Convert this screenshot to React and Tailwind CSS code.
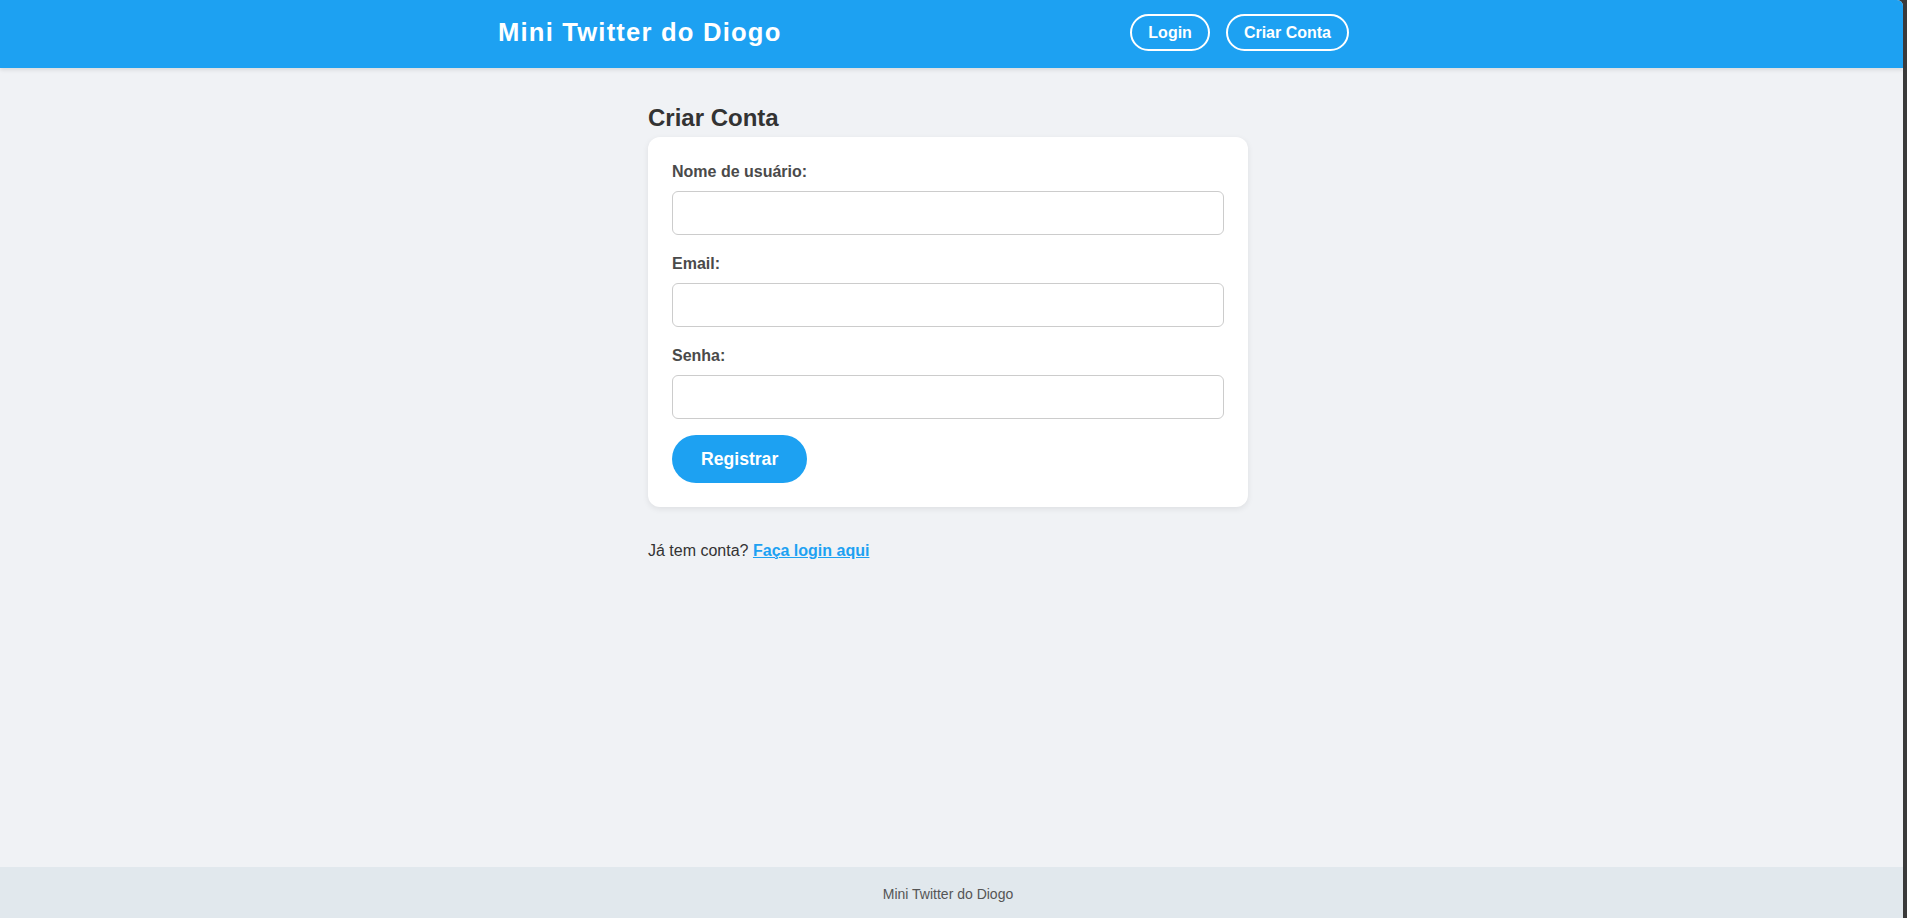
import React, { useState } from 'react';

const App = () => {
  const [form, setForm] = useState({ username: '', email: '', password: '' });

  const handleChange = (e) => {
    const { name, value } = e.target;
    setForm(prev => ({ ...prev, [name]: value }));
  };

  const fields = [
    { name: 'username', label: 'Nome de usuário:', type: 'text', gap: 'mb-[18px]' },
    { name: 'email', label: 'Email:', type: 'email', gap: 'mb-[18px]' },
    { name: 'password', label: 'Senha:', type: 'password', gap: 'mb-4' }
  ];

  return (
    <div className="min-h-screen flex bg-[#3a3a3a] font-['Liberation_Sans',Arial,sans-serif]">
      <div className="w-[1903px] min-h-screen flex flex-col bg-[#f0f2f5] rounded-tr-[6px] overflow-hidden">
        {/* Header */}
        <header className="relative z-10 h-[68px] pr-[7px] bg-[#1da1f2] shadow-[0_2px_4px_rgba(0,0,0,0.1)]">
          <div className="mx-auto w-[900px] h-full flex items-center justify-between pb-[3px]">
            <h1 className="text-[25.6px] font-bold tracking-[1.2px] text-white leading-none">
              Mini Twitter do Diogo
            </h1>
            <nav className="flex items-center gap-4 pr-[49px]">
              <a href="#" className="px-4 py-[7px] leading-[19px] border-2 border-white rounded-full text-white font-bold text-base">
                Login
              </a>
              <a href="#" className="px-4 py-[7px] leading-[19px] border-2 border-white rounded-full text-white font-bold text-base">
                Criar Conta
              </a>
            </nav>
          </div>
        </header>

        {/* Main */}
        <main className="flex-1 pt-9 pr-[7px]">
          <div className="mx-auto w-[600px]">
            <h2 className="text-2xl font-bold leading-[28px] text-[#333] mb-[5px]">Criar Conta</h2>

            <form className="bg-white rounded-[12px] p-6 shadow-[0_2px_6px_rgba(0,0,0,0.08)]">
              {fields.map(f => (
                <div key={f.name} className={f.gap}>
                  <label className="block mb-2 text-base leading-[22px] font-bold text-[#4a4a4a]">
                    {f.label}
                  </label>
                  <input
                    type={f.type}
                    name={f.name}
                    value={form[f.name]}
                    onChange={handleChange}
                    className="block w-full h-11 px-3 border border-[#ccc] rounded-md bg-white text-base outline-none"
                  />
                </div>
              ))}
              <button
                type="submit"
                className="h-12 px-[29px] rounded-full bg-[#1da1f2] text-white font-bold text-[17.6px]"
              >
                Registrar
              </button>
            </form>

            <p className="mt-8 text-base leading-[24px] text-[#333]">
              Já tem conta?{' '}
              <a href="#" className="font-bold text-[#1da1f2] underline">Faça login aqui</a>
            </p>
          </div>
        </main>

        {/* Footer */}
        <footer className="h-[51px] pr-[7px] pt-[3px] flex items-center justify-center bg-[#e1e8ed] text-sm text-[#555]">
          Mini Twitter do Diogo
        </footer>
      </div>
    </div>
  );
};

export default App;
